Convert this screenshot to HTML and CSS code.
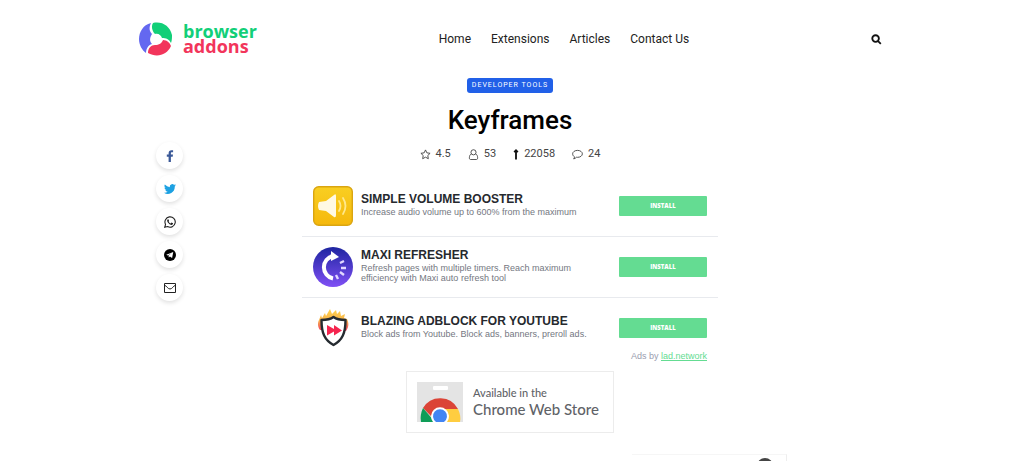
FILE: index.html
```html
<!DOCTYPE html>
<html lang="en">

<head>
    <meta charset="UTF-8">
    <meta name="viewport" content="width=device-width, initial-scale=1.0">
    <title>Keyframes - Browser Addons</title>
    <link rel="stylesheet" href="styles.css">
</head>

<body>
    <header class="header">
        <a class="logo" href="#">
            <svg class="logo-mark" viewBox="0 0 34 34" aria-hidden="true">
                <path fill="#6468f0" d="M12 1C4 3 0 10 0 17c0 6 3 11 7 14 0-4 2-8 6-9-3-3-2-7 0-10-3-3-3-7-1-11z" />
                <path fill="#12cf78" d="M14 1c9-2 17 3 19 12 0 3 0 5-1 8-2-4-5-5-9-5-1-3-4-5-7-4-3-3-4-8-2-11z" />
                <path fill="#f2355b" d="M9 31c0-5 3-8 7-8 4 0 7-2 8-5 4 0 7 3 8 6-4 9-14 12-23 7z" />
                <circle cx="17" cy="17" r="5" fill="#fff" />
            </svg>
            <span class="logo-text">
                <span class="logo-top">browser</span>
                <span class="logo-bottom">addons</span>
            </span>
        </a>
        <nav class="nav">
            <a href="#">Home</a>
            <a href="#">Extensions</a>
            <a href="#">Articles</a>
            <a href="#">Contact Us</a>
        </nav>
        <button class="search" type="button" aria-label="Search">
            <svg viewBox="0 0 12 12"><circle cx="5" cy="5" r="3.6" /><path d="M7.7 7.7l3 3" /></svg>
        </button>
    </header>

    <div class="page">
        <!-- Share buttons -->
        <aside class="share">
            <a href="#" aria-label="Facebook">
                <svg viewBox="0 0 12 12"><path fill="#3b5998" d="M4.6 12V6.700H2.800V4.600h1.800V3.200C4.600 1.200 5.700.2 7.500.2c.8 0 1.400.1 1.600.1v1.900H8c-.9 0-1.100.4-1.100 1.100v1.300H9l-.3 2.100H6.900V12z" /></svg>
            </a>
            <a href="#" aria-label="Twitter">
                <svg viewBox="0 0 24 24"><path fill="#1da1e2" d="M24 4.600a10 10 0 0 1-2.800.8 5 5 0 0 0 2.100-2.700 10 10 0 0 1-3.100 1.200 4.900 4.900 0 0 0-8.400 4.500A14 14 0 0 1 1.700 3.200a4.900 4.900 0 0 0 1.500 6.500A5 5 0 0 1 1 9.100a4.900 4.900 0 0 0 3.900 4.900 5 5 0 0 1-2.200.1 4.900 4.900 0 0 0 4.600 3.400A10 10 0 0 1 0 19.500 14 14 0 0 0 21.500 7z" /></svg>
            </a>
            <a href="#" aria-label="WhatsApp">
                <svg viewBox="0 0 24 24">
                    <path fill="none" stroke="#222" stroke-width="2.200" d="M1.500 22.500l1.600-5.700A10.300 10.300 0 1 1 7.200 21z" />
                    <path fill="#222" d="M8.800 6.500c-.9-.5-2.500.9-2.500 2.700 0 3.800 5.300 8.800 8.800 8.600 2-.1 3.200-1.600 3-3.100l-3.300-1.600-1.500 1.800c-1.700-.5-3.300-2-4-3.600L10.200 10z" />
                </svg>
            </a>
            <a href="#" aria-label="Telegram">
                <svg viewBox="0 0 24 24"><circle cx="12" cy="12" r="12" /><path fill="#fff" d="M4.500 11.700L18.500 6l-2.300 12.200-4.400-3.300-2.200 2.200-.5-3.900 6.400-5.300-7.800 5z" /></svg>
            </a>
            <a href="#" aria-label="Email">
                <svg viewBox="0 0 12 12"><path fill="none" stroke="#222" d="M.5 1.500h11v9H.5zM.5 3c2 1 3.500 4 5.500 4s3.500-3 5.500-4" /></svg>
            </a>
        </aside>

        <main class="content">
            <a class="badge" href="#">DEVELOPER TOOLS</a>
            <h1>Keyframes</h1>
            <ul class="stats">
                <li>
                    <svg viewBox="0 0 12 12"><path d="M6 1l1.500 3.200 3.500.5-2.500 2.400.6 3.500L6 8.900l-3.100 1.700.6-3.500L1 4.700l3.500-.5z" /></svg>
                    4.5
                </li>
                <li>
                    <svg viewBox="0 0 12 12"><circle cx="6" cy="3.600" r="2.800" /><path d="M3.600 5.500C2 6 1.500 8 1.500 9.500S2 11.500 3 11.500h6c1 0 1.500-.5 1.500-2S10 6 8.400 5.500" /></svg>
                    53
                </li>
                <li class="users">
                    <svg viewBox="0 0 6 12"><path d="M3 11.500V2M1 3.500l2-2 2 2" /></svg>
                    22058
                </li>
                <li>
                    <svg viewBox="0 0 12 12"><path d="M6 1.500c3 0 5.300 1.700 5.300 3.800S9 9.100 6 9.100l-1.200-.1C4 10 3 10.600 1.800 10.800c.6-.7.9-1.400.9-2.300C1.400 7.800.7 6.600.7 5.300.7 3.200 3 1.500 6 1.500z" /></svg>
                    24
                </li>
            </ul>

            <section class="ads">
                <div class="ad">
                    <svg class="ad-icon" viewBox="0 0 40 40">
                        <defs>
                            <linearGradient id="gold" x2="0" y2="1"><stop stop-color="#f9cf22" /><stop offset="1" stop-color="#f5b80c" /></linearGradient>
                        </defs>
                        <rect x=".7" y=".7" width="38.600" height="38.600" rx="5" fill="url(#gold)" stroke="#daa511" stroke-width="1.400" />
                        <path fill="#fff9e4" d="M6 16q-2 4 0 8l7 1 8 6q2 1 2-2V10q0-3-2-1l-8 6z" />
                        <path fill="none" stroke="#ffe88c" stroke-width="1.800" stroke-linecap="round" d="M26 15q3 5 0 10M30 12q5 8 0 16" />
                    </svg>
                    <div class="ad-text">
                        <h2>SIMPLE VOLUME BOOSTER</h2>
                        <p>Increase audio volume up to 600% from the maximum</p>
                    </div>
                    <button class="install" type="button">INSTALL</button>
                </div>
                <div class="ad">
                    <svg class="ad-icon" viewBox="0 0 40 40">
                        <defs>
                            <linearGradient id="violet" x2="0" y2="1"><stop stop-color="#1e25a0" /><stop offset="1" stop-color="#8050f5" /></linearGradient>
                        </defs>
                        <circle cx="20" cy="20" r="20" fill="url(#violet)" />
                        <path fill="none" stroke="#fff" stroke-width="4" d="M20 31.500A11.500 11.500 0 0 1 20 9" />
                        <path fill="#fff" d="M18 4l8 6-8 4z" />
                        <path stroke="#e2d8ff" stroke-width="2.400" d="M27 16l4-2M28 21h5M27 25l4 3M23 28l2 4" />
                    </svg>
                    <div class="ad-text">
                        <h2>MAXI REFRESHER</h2>
                        <p>Refresh pages with multiple timers. Reach maximum efficiency with Maxi auto refresh tool</p>
                    </div>
                    <button class="install" type="button">INSTALL</button>
                </div>
                <div class="ad">
                    <svg class="ad-icon" viewBox="0 0 40 40">
                        <defs>
                            <linearGradient id="fire" x2="0" y2="1"><stop stop-color="#ffd34a" /><stop offset=".5" stop-color="#f9b54c" /><stop offset="1" stop-color="#ef3b60" /></linearGradient>
                        </defs>
                        <path fill="url(#fire)" d="M7 22C4 18 5 14 6 12l2-5 1 3 3-5 1 3 4-7 2 5 4-4 1 4 3-3 1 5 4-2-1 4 3 1c2 4 2 8-1 12z" />
                        <path fill="#fff" stroke="#252b30" stroke-width="2.400" stroke-linejoin="round" d="M20.500 9c-4 3-8 3-12 3 0 13 3 20 12 25 9-5 12-12 12-25-4 0-8 0-12-3z" />
                        <path fill="#f5254f" d="M14 17l7 4v-4l8 5.500-8 5v-4l-7 4z" />
                    </svg>
                    <div class="ad-text">
                        <h2>BLAZING ADBLOCK FOR YOUTUBE</h2>
                        <p>Block ads from Youtube. Block ads, banners, preroll ads.</p>
                    </div>
                    <button class="install" type="button">INSTALL</button>
                </div>
                <p class="ads-by">Ads by <a href="#">lad.network</a></p>
            </section>

            <a class="store" href="#">
                <svg viewBox="0 0 46 40" aria-hidden="true">
                    <path fill="#e4e4e4" d="M0 0h46v40H0z" />
                    <rect x="16" y="4" width="15" height="4" rx="1" fill="#fff" />
                    <path fill="#db4437" d="M6 26a20 20 0 0 1 35 1H23l-8 8z" />
                    <path fill="#0f9d58" d="M6 26l12 14H4c-1-5 0-10 2-14z" />
                    <path fill="#ffcd40" d="M23 27h18c2 4 3 9 2 13H28z" />
                    <path fill="#fff" d="M16 40a9 9 0 1 1 14 0z" />
                    <path fill="#4285f4" d="M19 40a7 7 0 1 1 8 0z" />
                </svg>
                <span class="store-text">
                    <span class="store-small">Available in the</span>
                    <span class="store-name">Chrome Web Store</span>
                </span>
            </a>

            <div class="preview"><span class="preview-dot"></span></div>
        </main>
    </div>
</body>

</html>
```
FILE: styles.css
```css
* {
    box-sizing: border-box;
}

body {
    margin: 0;
    padding-right: 4px;
    background: #fff;
    color: #222;
    font-family: Roboto, "Liberation Sans", sans-serif;
    font-size: 11px;
}

a {
    color: inherit;
    text-decoration: none;
}

h1,
h2,
p,
ul {
    margin: 0;
    padding: 0;
}

button {
    border: 0;
    padding: 0;
    cursor: pointer;
}

svg {
    display: block;
    flex-shrink: 0;
}

/* Header */
.header {
    display: flex;
    align-items: center;
    justify-content: space-between;
    max-width: 744px;
    height: 78px;
    margin: 0 auto;
}

.logo {
    display: flex;
    align-items: center;
    gap: 10px;
}

.logo-mark {
    width: 34px;
    height: 34px;
    margin-left: 1px;
}

.logo-text {
    display: flex;
    flex-direction: column;
    font-family: "Open Sans", sans-serif;
    font-size: 18px;
    font-weight: 700;
    line-height: 15px;
}

.logo-top {
    color: #12cf78;
}

.logo-bottom {
    color: #f2355b;
}

.nav {
    display: flex;
    gap: 20px;
    font-size: 12px;
}

.search {
    background: none;
}

.search svg {
    width: 11px;
    height: 11px;
    fill: none;
    stroke: #111;
    stroke-width: 2;
}

/* Page */
.page {
    display: grid;
    grid-template-columns: 1fr minmax(0, 416px) 1fr;
    max-width: 744px;
    margin: 0 auto;
}

.share {
    display: flex;
    flex-direction: column;
    gap: 6px;
    padding: 64px 0 0 18px;
}

.share a {
    display: flex;
    align-items: center;
    justify-content: center;
    width: 27px;
    height: 27px;
    border-radius: 50%;
    box-shadow: 0 2px 4px rgba(0, 0, 0, 0.12);
}

.share svg {
    width: 12px;
    height: 12px;
}

.content {
    display: flex;
    flex-direction: column;
    align-items: center;
}

.badge {
    padding: 0 5px;
    border-radius: 3px;
    background: #2160e8;
    color: #fff;
    font-size: 7px;
    letter-spacing: 1px;
    line-height: 15px;
}

h1 {
    margin-top: 11px;
    color: #000;
    font-size: 26px;
    font-weight: 500;
    line-height: 32px;
}

.stats {
    display: flex;
    gap: 17px;
    margin: 10px 0 14px;
    color: #444;
    list-style: none;
    line-height: 16px;
}

.stats li {
    display: flex;
    align-items: center;
    gap: 5px;
}

.stats svg {
    width: 11px;
    height: 11px;
    fill: none;
    stroke: #444;
}

.stats .users svg {
    width: 6px;
    stroke: #111;
    stroke-width: 2;
}

/* Ads */
.ads {
    width: 100%;
    font-family: "Liberation Sans", Arial, sans-serif;
}

.ad {
    display: flex;
    align-items: center;
    gap: 8px;
    padding: 10px 11px;
    border-bottom: 1px solid #e8eaee;
}

.ad:nth-child(3) {
    padding-bottom: 0;
    border-bottom: 0;
}

.ad-icon {
    width: 40px;
    height: 40px;
}

.ad-text {
    flex: 1;
    padding-bottom: 4px;
}

.ad h2 {
    color: #26292e;
    font-size: 12px;
    line-height: 16px;
    white-space: nowrap;
}

.ad p {
    max-width: 232px;
    color: #74777f;
    font-size: 9px;
    line-height: 10px;
}

.install {
    width: 88px;
    height: 20px;
    border-radius: 1px;
    background: #64dc92;
    color: #fff;
    font-family: "Open Sans", sans-serif;
    font-size: 6px;
    font-weight: 800;
}

.ads-by {
    padding-right: 11px;
    color: #9a9daf;
    font-size: 9px;
    line-height: 16px;
    text-align: right;
}

.ads-by a {
    color: #64dc92;
    text-decoration: underline;
}

/* Store link */
.store {
    display: flex;
    align-items: center;
    gap: 10px;
    width: 208px;
    height: 62px;
    margin-top: 7px;
    padding-left: 10px;
    border: 1px solid #ececec;
    color: #5f6368;
    font-family: Lato, sans-serif;
}

.store svg {
    width: 46px;
    height: 40px;
}

.store-text {
    display: flex;
    flex-direction: column;
}

.store-small {
    font-size: 11px;
    font-weight: 500;
    line-height: 14px;
}

.store-name {
    font-size: 15px;
    font-weight: 500;
    line-height: 18px;
}

.preview {
    align-self: flex-end;
    width: 155px;
    height: 7px;
    margin: 21px -69px 0 0;
    overflow: hidden;
    border-top: 1px solid #f6f6f6;
    border-right: 1px solid #eee;
}

.preview-dot {
    display: block;
    width: 16px;
    height: 16px;
    margin: 3px 13px 0 auto;
    border-radius: 50%;
    background: #444;
}
```
